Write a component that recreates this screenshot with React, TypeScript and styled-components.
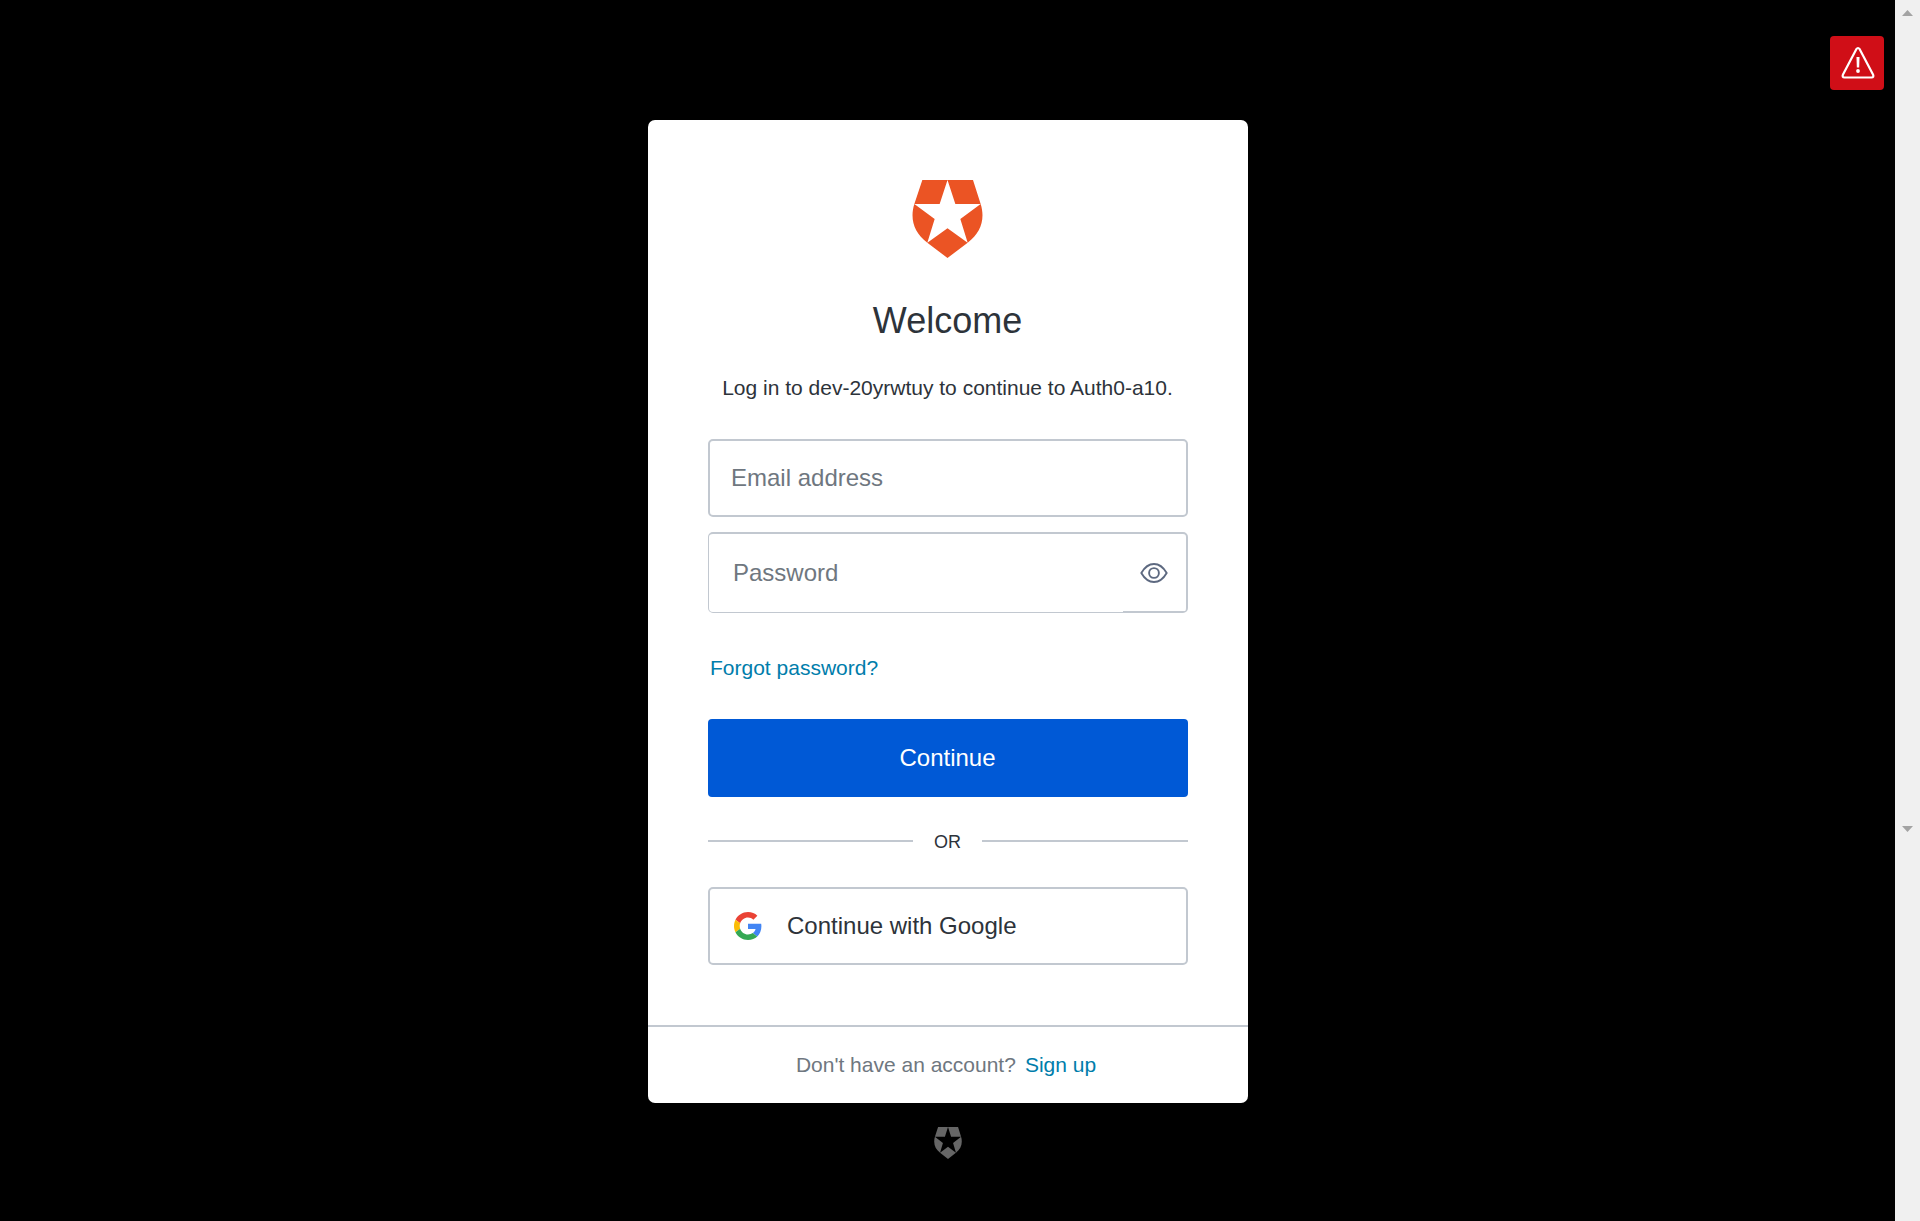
import React from "react";
import styled, { createGlobalStyle } from "styled-components";

const line = "#c2c8d0";
const ink = "#2d333a";
const muted = "#6f7780";
const link = "#007dab";

const GlobalStyle = createGlobalStyle`
  *, *::before, *::after { box-sizing: border-box; }
  html, body { margin: 0; padding: 0; background: #000; }
  body { font-family: "Liberation Sans", Arial, sans-serif; color: ${ink}; overflow: hidden; }
`;

const Page = styled.div`
  display: flex;
  width: 100vw;
  height: 100vh;
  min-height: 1221px;
  background: #000;
`;

const Main = styled.main`
  position: relative;
  flex: 1;
  display: flex;
  flex-direction: column;
  align-items: center;
  padding: 120px 0 0 1px;
`;

const AlertBadge = styled.button`
  position: absolute;
  top: 36px;
  right: 11px;
  width: 54px;
  height: 54px;
  display: flex;
  align-items: center;
  justify-content: center;
  padding: 0 0 0 1px;
  border: 0;
  border-radius: 4px;
  background: #d00e17;
`;

const Card = styled.section`
  width: 600px;
  height: 983px;
  display: flex;
  flex-direction: column;
  background: #fff;
  border-radius: 7px;
  overflow: hidden;
`;

const Body = styled.div`
  flex: 1;
  display: flex;
  flex-direction: column;
  padding: 60px 60px 0;
`;

const Logo = styled.svg`
  display: block;
  align-self: center;
  flex: none;
  margin-right: 1px;
`;

const Title = styled.h1`
  margin: 42px 0 0;
  padding-right: 1px;
  font-size: 36px;
  line-height: 42px;
  font-weight: 400;
  text-align: center;
`;

const Subtitle = styled.p`
  margin: 30px 0 0;
  padding-right: 1px;
  font-size: 21px;
  line-height: 32px;
  text-align: center;
`;

const Form = styled.form`
  display: flex;
  flex-direction: column;
  margin-top: 35px;
`;

const inputReset = `
  flex: 1;
  min-width: 0;
  border: 0;
  outline: 0;
  background: transparent;
  font: 24px "Liberation Sans", Arial, sans-serif;
  color: ${ink};
`;

const Field = styled.label`
  display: flex;
  height: 78px;
  border: 2px solid ${line};
  border-radius: 5px;
`;

const PasswordField = styled(Field)`
  height: 81px;
  margin-top: 15px;
  border-width: 2px 2px 1px 1px;
`;

const Input = styled.input<{ $left: number }>`
  ${inputReset}
  padding: 0 0 0 ${(p) => p.$left}px;
  &::placeholder { color: ${muted}; opacity: 1; }
`;

const Reveal = styled.button`
  width: 63px;
  display: flex;
  align-items: center;
  justify-content: center;
  padding: 0 2px 0 0;
  border: 0;
  border-bottom: 1px solid ${line};
  background: transparent;
`;

const Link = styled.a`
  color: ${link};
  font-size: 21px;
  line-height: 24px;
  text-decoration: none;
`;

const Forgot = styled(Link)`
  align-self: flex-start;
  margin: 43px 0 0 2px;
`;

const Submit = styled.button`
  height: 78px;
  margin-top: 39px;
  padding: 0 1px 0 0;
  border: 0;
  border-radius: 4px;
  background: #0059d6;
  color: #fff;
  font: 24px "Liberation Sans", Arial, sans-serif;
`;

const Divider = styled.div`
  display: flex;
  align-items: center;
  height: 22px;
  margin-top: 33px;
  font-size: 18px;
  line-height: 22px;
  &::before, &::after {
    content: "";
    flex: 1;
    height: 2px;
    background: ${line};
  }
  &::before { flex: 0 0 205px; }
`;

const DividerText = styled.span`
  width: 69px;
  padding-top: 1px;
  text-align: center;
`;

const Social = styled.button`
  display: flex;
  align-items: center;
  gap: 25px;
  height: 78px;
  margin-top: 35px;
  padding: 0 0 0 24px;
  border: 2px solid ${line};
  border-radius: 5px;
  background: #fff;
  color: ${ink};
  font: 24px "Liberation Sans", Arial, sans-serif;
`;

const Footer = styled.footer`
  display: flex;
  justify-content: center;
  gap: 9px;
  height: 78px;
  padding: 26px 4px 0 0;
  border-top: 2px solid ${line};
  color: ${muted};
  font-size: 21px;
  line-height: 24px;
`;

const Brand = styled.div`
  margin-top: 24px;
`;

const Scrollbar = styled.aside`
  flex: none;
  width: 25px;
  display: flex;
  flex-direction: column;
  align-items: center;
  gap: 810px;
  padding-top: 10px;
  background: #f0f0f0;
`;

const Arrow = styled.i<{ $down?: boolean }>`
  flex: none;
  width: 11px;
  height: 6px;
  background: #a3a3a3;
  clip-path: ${(p) =>
    p.$down ? "polygon(0 0, 100% 0, 50% 100%)" : "polygon(50% 0, 100% 100%, 0 100%)"};
`;

function Shield({ width, height, color }: { width: number; height: number; color: string }) {
  return (
    <Logo width={width} height={height} viewBox="66 60 213 234" preserveAspectRatio="none">
      <path
        fill={color}
        fillRule="evenodd"
        d="M97 60H249L272 132C286 176 273 219 233 248L172.500 294L112 248C72 219 59 176 73 132ZM172.500 60L149 132H73L134 177L112 248L172.500 205L233 248L211 177L272 132H196Z"
      />
    </Logo>
  );
}

function WarningIcon() {
  return (
    <svg width="34" height="34" viewBox="0 0 34 34" fill="none">
      <path
        d="M15.300 3.200Q17 .8 18.700 3.200L32 28.500Q33.200 31.500 30.500 31.500H3.500Q.8 31.500 2 28.500Z"
        stroke="#fff"
        strokeWidth="2.200"
        strokeLinejoin="round"
      />
      <path d="M15.500 11H18.500L18.200 21.500H15.800Z" fill="#fff" />
      <circle cx="17" cy="25" r="1.900" fill="#fff" />
    </svg>
  );
}

function EyeIcon() {
  return (
    <svg width="28" height="22" viewBox="0 0 28 22" fill="none" stroke="#5d6980" strokeWidth="1.900">
      <path d="M1.300 11Q6.500 2 14 2T26.700 11Q21.500 20 14 20T1.300 11Z" strokeLinejoin="round" />
      <circle cx="14" cy="11" r="4.900" />
    </svg>
  );
}

function GoogleIcon() {
  return (
    <svg width="28" height="28" viewBox="0 0 48 48" preserveAspectRatio="none">
      <path fill="#EA4335" d="M24 9.500c3.540 0 6.710 1.220 9.210 3.600l6.850-6.850C35.900 2.380 30.470 0 24 0 14.620 0 6.510 5.380 2.560 13.220l7.980 6.190C12.430 13.720 17.740 9.500 24 9.500z" />
      <path fill="#4285F4" d="M46.980 24.550c0-1.570-.15-3.090-.38-4.550H24v9.020h12.940c-.58 2.960-2.260 5.480-4.780 7.180l7.730 6c4.510-4.180 7.090-10.360 7.090-17.650z" />
      <path fill="#FBBC05" d="M10.530 28.590c-.48-1.450-.76-2.990-.76-4.590s.27-3.140.76-4.590l-7.980-6.190C.92 16.460 0 20.120 0 24c0 3.880.92 7.540 2.560 10.780l7.970-6.190z" />
      <path fill="#34A853" d="M24 48c6.480 0 11.930-2.130 15.890-5.810l-7.730-6c-2.150 1.450-4.920 2.300-8.160 2.300-6.260 0-11.570-4.220-13.470-9.910l-7.980 6.190C6.510 42.620 14.620 48 24 48z" />
    </svg>
  );
}

export default function App() {
  return (
    <Page>
      <GlobalStyle />
      <Main>
        <Card>
          <Body>
            <Shield width={71} height={78} color="#eb5424" />
            <Title>Welcome</Title>
            <Subtitle>Log in to dev-20yrwtuy to continue to Auth0-a10.</Subtitle>
            <Form>
              <Field>
                <Input $left={21} type="text" placeholder="Email address" />
              </Field>
              <PasswordField>
                <Input $left={24} type="password" placeholder="Password" />
                <Reveal type="button" aria-label="Show password">
                  <EyeIcon />
                </Reveal>
              </PasswordField>
              <Forgot>Forgot password?</Forgot>
              <Submit type="button">Continue</Submit>
            </Form>
            <Divider>
              <DividerText>OR</DividerText>
            </Divider>
            <Social type="button">
              <GoogleIcon />
              <span>Continue with Google</span>
            </Social>
          </Body>
          <Footer>
            <span>Don't have an account?</span>
            <Link>Sign up</Link>
          </Footer>
        </Card>
        <Brand>
          <Shield width={28} height={32} color="#666" />
        </Brand>
        <AlertBadge type="button" aria-label="Warning">
          <WarningIcon />
        </AlertBadge>
      </Main>
      <Scrollbar>
        <Arrow />
        <Arrow $down />
      </Scrollbar>
    </Page>
  );
}
